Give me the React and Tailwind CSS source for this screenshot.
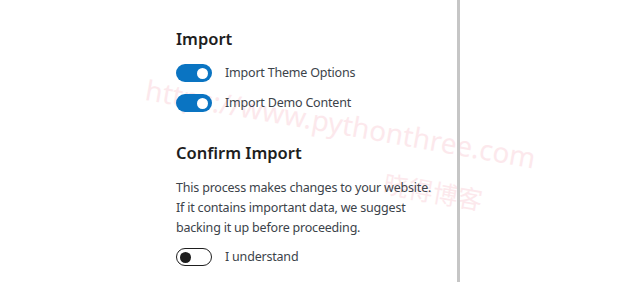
import React from 'react'

const font = { fontFamily: '"Noto Sans", "Open Sans", sans-serif' }

function Toggle({ on }) {
  return on ? (
    <span className="relative inline-flex h-[18px] w-[36px] shrink-0 items-center rounded-full bg-[#0a74c2]">
      <span className="absolute right-[4px] h-[11px] w-[11px] rounded-full bg-white" />
    </span>
  ) : (
    <span className="relative inline-flex h-[18px] w-[36px] shrink-0 items-center rounded-full border border-[#1e1e1e] bg-white">
      <span className="absolute left-[3px] h-[11px] w-[11px] rounded-full bg-[#1e1e1e]" />
    </span>
  )
}

function Option({ on, label }) {
  return (
    <div className="flex h-[30px] items-center gap-[13px]">
      <Toggle on={on} />
      <span className="text-[12.5px] tracking-[-0.2px] text-[#3c434a]">{label}</span>
    </div>
  )
}

export default function App() {
  return (
    <div className="relative flex h-[282px] w-[641px] overflow-hidden bg-white" style={font}>
      {/* watermark sits behind the panel content */}
      <div className="pointer-events-none absolute left-[146px] top-[68px] origin-left rotate-[10deg] whitespace-nowrap text-[28px] text-[#fbd3da] opacity-50">
        https://www.pythonthree.com
      </div>
      <div
        className="pointer-events-none absolute left-[384px] top-[164px] origin-left rotate-[10deg] whitespace-nowrap text-[25px] text-[#fbd3da] opacity-50"
        style={{ fontFamily: '"Noto Sans CJK SC", sans-serif' }}
      >
        晓得博客
      </div>

      <div className="relative z-10 h-full w-[460px] shrink-0 border-r-[3px] border-[#c6c6c6] pl-[176px] pt-[27px]">
        <h2 className="text-[16.5px] font-semibold leading-[24px] text-[#1e1e1e]">Import</h2>
        <div className="mt-[7px]">
          <Option on label="Import Theme Options" />
          <Option on label="Import Demo Content" />
        </div>
        <h2 className="mt-[23px] text-[16.5px] font-semibold leading-[24px] text-[#1e1e1e]">Confirm Import</h2>
        <p className="mt-[13px] whitespace-nowrap text-[12.5px] leading-[20px] tracking-[-0.2px] text-[#3c434a]">
          This process makes changes to your website.
          <br />
          If it contains important data, we suggest
          <br />
          backing it up before proceeding.
        </p>
        <div className="mt-[4px]">
          <Option label="I understand" />
        </div>
      </div>
      <div className="flex-1" />
    </div>
  )
}
